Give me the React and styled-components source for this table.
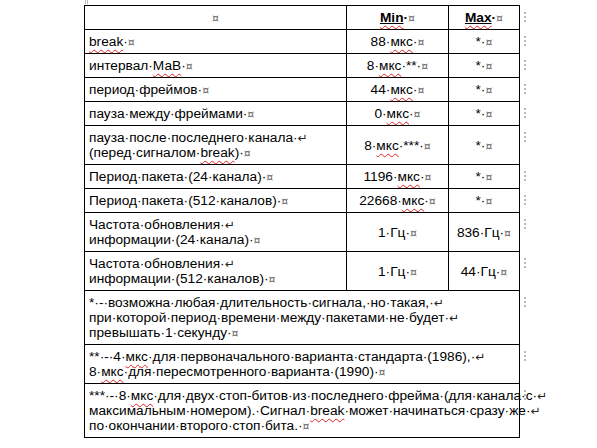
import React from 'react';
import styled, { createGlobalStyle } from 'styled-components';

const GlobalStyle = createGlobalStyle`
  html, body {
    margin: 0;
    padding: 0;
    background: #ffffff;
  }
  body {
    font-family: "Liberation Sans", Arial, sans-serif;
    color: #000000;
  }
`;

const Page = styled.div`
  width: 597px;
  height: 448px;
  overflow: hidden;
  padding: 5px 0 0 84px;
  box-sizing: border-box;
  position: relative;
`;

const Anchor = styled.span`
  position: absolute;
  left: 85px;
  top: 0;
  width: 1px;
  height: 4px;
  border-left: 1px solid #bbb;
  border-right: 1px solid #bbb;
`;

const Table = styled.table`
  border-collapse: collapse;
  table-layout: fixed;
  width: 435px;
  font-size: 13.7px;
  line-height: 15px;
`;

const Cell = styled.td`
  border: 1px solid #000;
  padding: 4px 4px 4px 4px;
  text-align: ${(p) => p.$align || 'left'};
  vertical-align: middle;
  position: relative;
  white-space: nowrap;
`;

const HeadCell = styled(Cell)`
  font-weight: bold;
`;

const Underlined = styled.span`
  text-decoration: underline;
  text-decoration-color: #000;
  text-underline-offset: 1px;
`;

const Spell = styled.span`
  text-decoration: underline wavy #e02020;
  text-decoration-thickness: 1px;
  text-underline-offset: 3px;
`;

const Mark = styled.span`
  font-family: "DejaVu Sans", sans-serif;
  color: #666;
  font-size: 11px;
  font-weight: normal;
  line-height: 0;
`;

const Arrow = styled.span`
  font-family: "DejaVu Sans", sans-serif;
  font-size: 12px;
  line-height: 0;
  color: #222;
`;

const RowEnd = styled.span`
  position: absolute;
  right: -7px;
  top: 6px;
  width: 0;
  height: 10px;
  border-left: 2px dotted #b8b8b8;
`;

const M = () => <Mark>¤</Mark>;

const Br = () => (
  <>
    <Arrow>↵</Arrow>
    <br />
  </>
);

const mks = <Spell>мкс</Spell>;

const rows = [
  { label: <><Spell>break</Spell>·<M /></>, min: <>88·{mks}·<M /></> },
  { label: <>интервал·<Spell>МаВ</Spell>·<M /></>, min: <>8·{mks}·**·<M /></> },
  { label: <>период·фреймов·<M /></>, min: <>44·{mks}·<M /></> },
  { label: <>пауза·между·фреймами·<M /></>, min: <>0·{mks}·<M /></> },
  {
    label: <>пауза·после·последнего·канала·<Br />(перед·сигналом·<Spell>break</Spell>)·<M /></>,
    min: <>8·{mks}·***·<M /></>,
  },
  { label: <>Период·пакета·(24·канала)·<M /></>, min: <>1196·{mks}·<M /></> },
  { label: <>Период·пакета·(512·каналов)·<M /></>, min: <>22668·{mks}·<M /></> },
  {
    label: <>Частота·обновления·<Br />информации·(24·канала)·<M /></>,
    min: <>1·Гц·<M /></>,
    max: <>836·Гц·<M /></>,
  },
  {
    label: <>Частота·обновления·<Br />информации·(512·каналов)·<M /></>,
    min: <>1·Гц·<M /></>,
    max: <>44·Гц·<M /></>,
  },
];

const notes = [
  <>*·-·возможна·любая·длительность·сигнала,·но·такая,·<Br />при·которой·период·времени·между·пакетами·не·будет·<Br />превышать·1·секунду·<M /></>,
  <>**·-·4·{mks}·для·первоначального·варианта·стандарта·(1986),·<Br />8·{mks}·для·пересмотренного·варианта·(1990)·<M /></>,
  <>***·-·8·{mks}·для·двух·стоп-битов·из·последнего·фрейма·(для·канала·с·<Br />максимальным·номером).·Сигнал·<Spell>break</Spell>·может·начинаться·сразу·же·<Br />по·окончании·второго·стоп·бита.·<M /></>,
];

export default function App() {
  return (
    <>
      <GlobalStyle />
      <Page>
        <Anchor />
        <Table>
          <colgroup>
            <col style={{ width: 262 }} />
            <col style={{ width: 102 }} />
            <col style={{ width: 71 }} />
          </colgroup>
          <tbody>
            <tr>
              <HeadCell $align="center"><M /></HeadCell>
              <HeadCell $align="center">
                <Underlined><Spell>Min</Spell></Underlined>·<M />
              </HeadCell>
              <HeadCell $align="center">
                <Underlined><Spell>Max</Spell></Underlined>·<M />
                <RowEnd />
              </HeadCell>
            </tr>
            {rows.map((r, i) => (
              <tr key={i}>
                <Cell>{r.label}</Cell>
                <Cell $align="center">{r.min}</Cell>
                <Cell $align="center">
                  {r.max || <>*·<M /></>}
                  <RowEnd />
                </Cell>
              </tr>
            ))}
            {notes.map((n, i) => (
              <tr key={'n' + i}>
                <Cell colSpan={3}>
                  {n}
                  <RowEnd />
                </Cell>
              </tr>
            ))}
          </tbody>
        </Table>
      </Page>
    </>
  );
}
